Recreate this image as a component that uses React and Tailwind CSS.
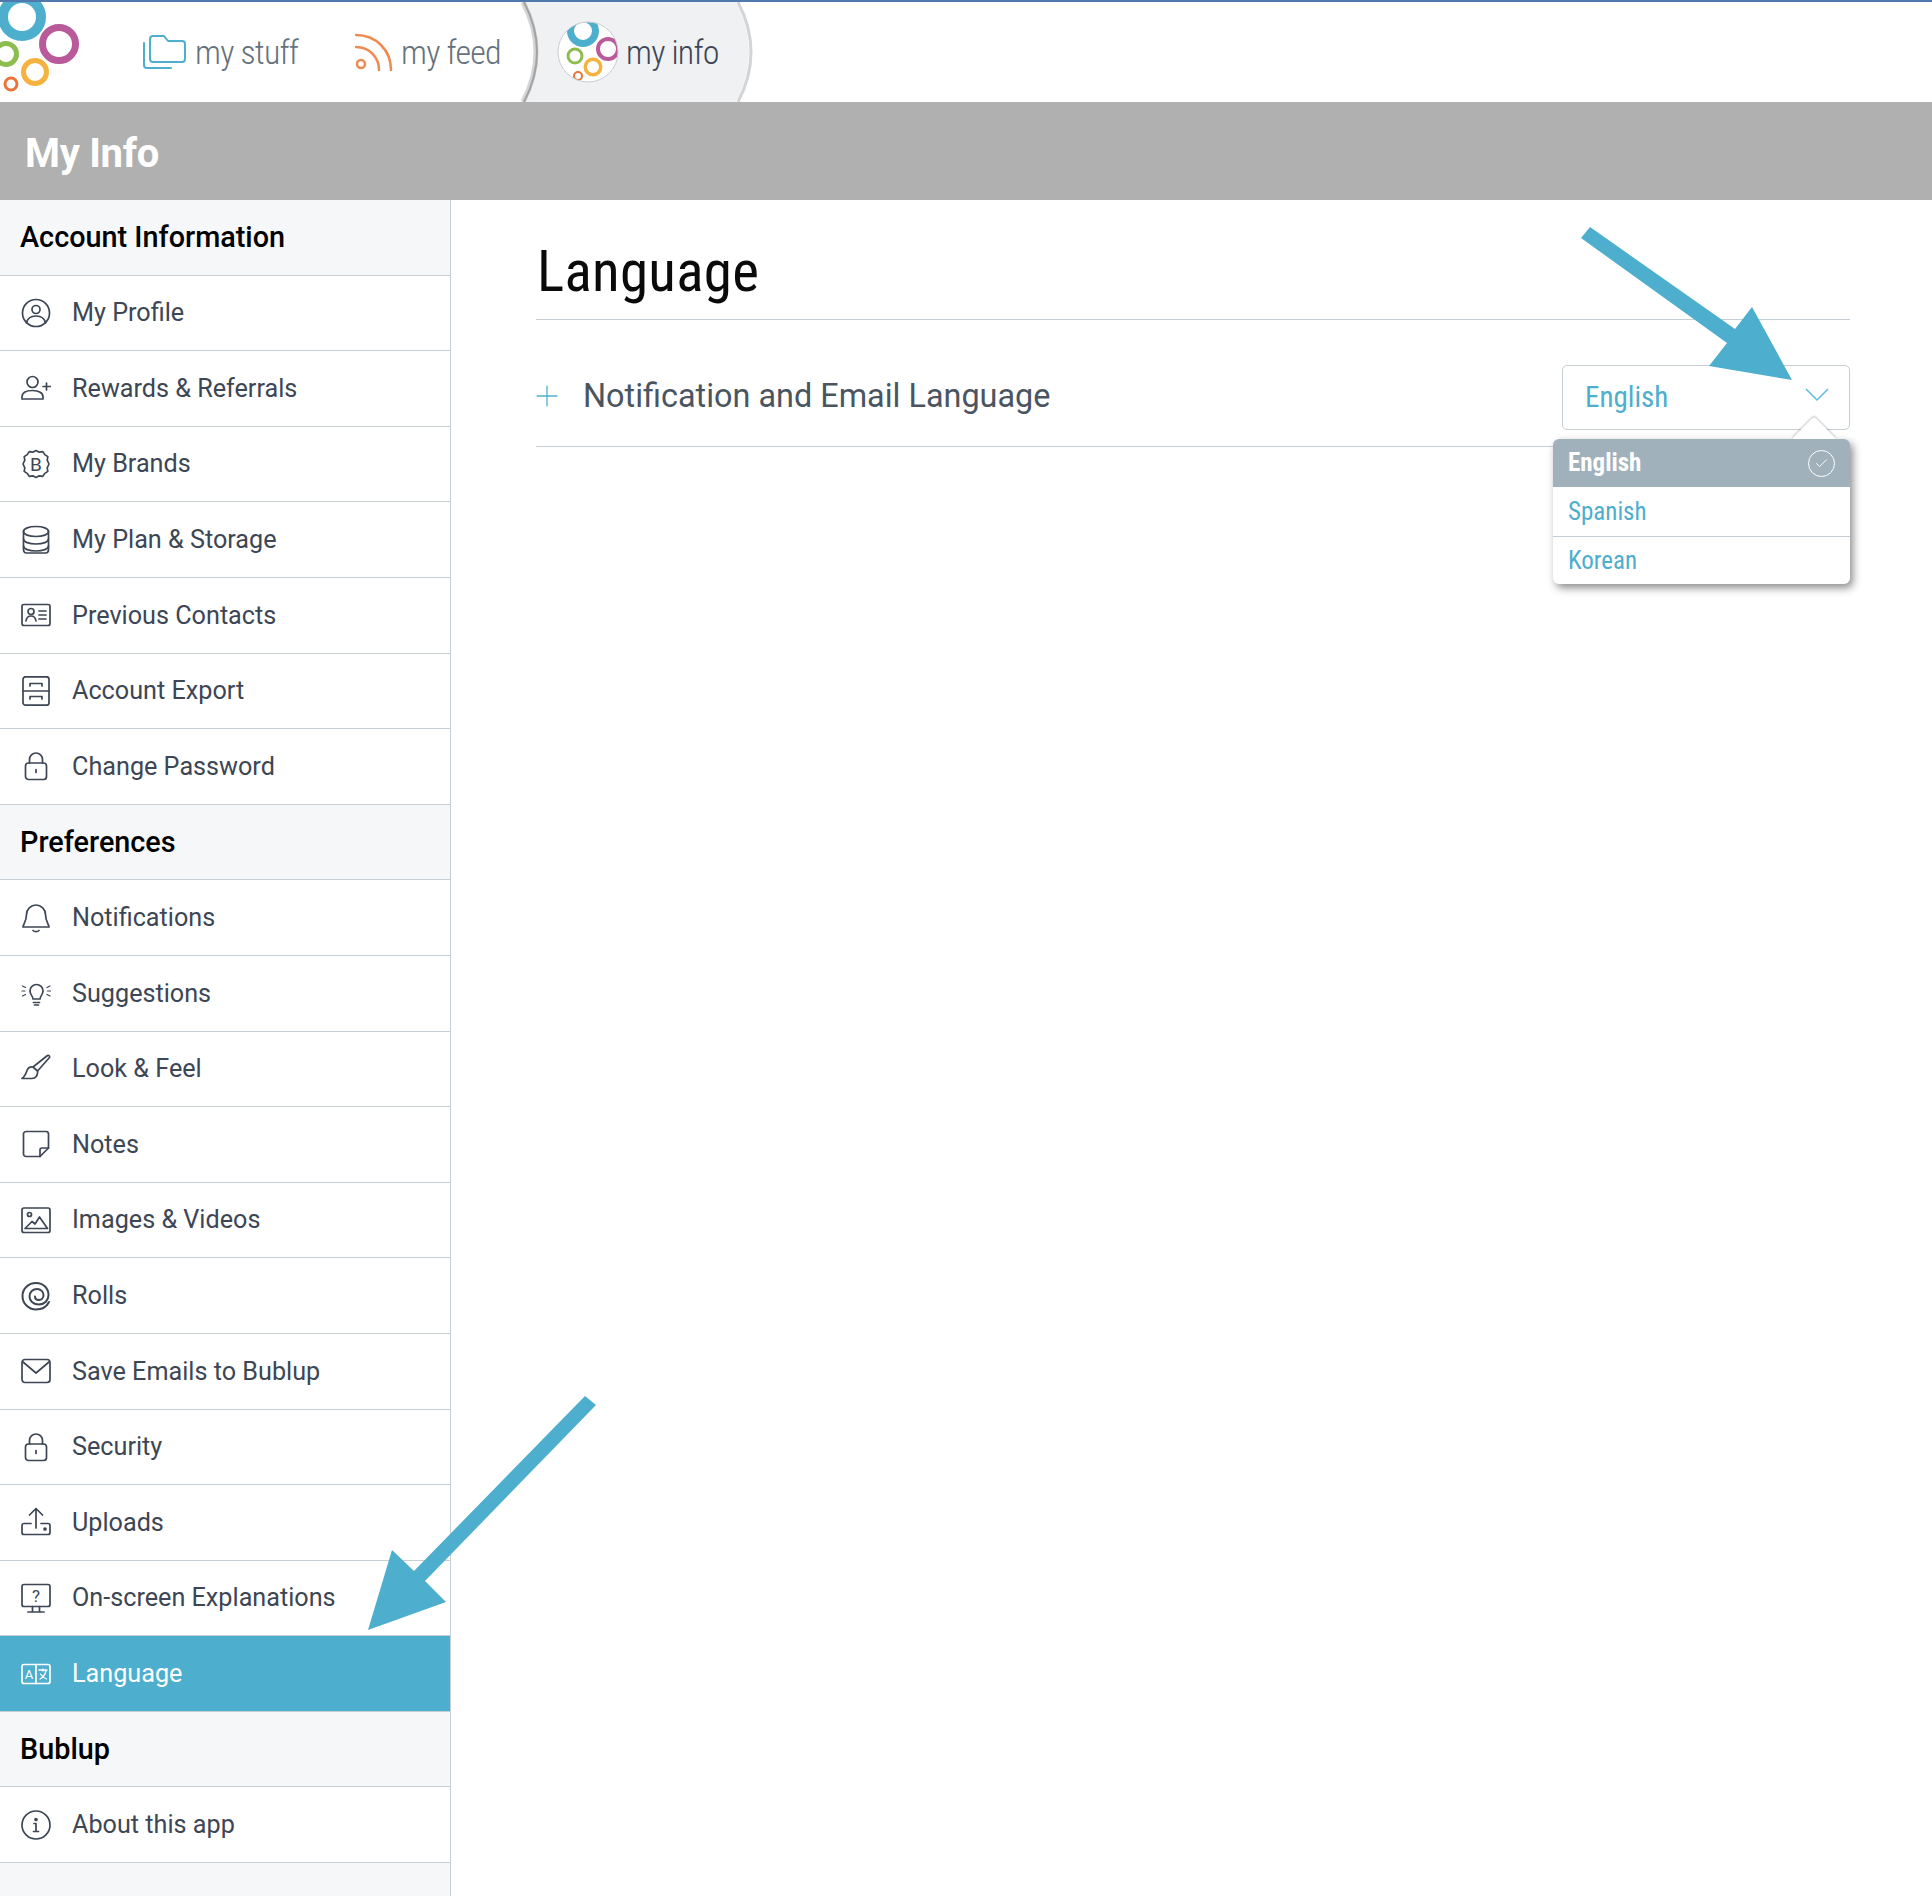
import { Check, Plus } from 'lucide-react';

const stroke = { fill: 'none', stroke: 'currentColor', strokeWidth: 1.700, strokeLinecap: 'round', strokeLinejoin: 'round' };

const icons = {
  profile: (<><circle cx="15" cy="15" r="13.500" /><circle cx="15" cy="11.500" r="4" /><path d="M5.500 25c1-5 4.500-7 9.500-7s8.500 2 9.500 7" /></>),
  rewards: (<><circle cx="11.500" cy="9" r="5.500" /><path d="M1 26v-2c0-4 4-6.500 10.500-6.500S22 20 22 24v2z" /><path d="M25.500 10v7M22 13.500h7.500" /></>),
  brands: (<><path d="M15 1.500l3.200 1.700 3.600-.6 2 3 3 2-.6 3.600L28 15l-1.800 3.800.6 3.600-3 2-2 3-3.600-.6-3.200 1.700-3.200-1.700-3.600.6-2-3-3-2 .6-3.600L2 15l1.800-3.800-.6-3.600 3-2 2-3 3.600.6z" /><text x="15" y="21.500" textAnchor="middle" fontSize="19" fontFamily="Roboto, sans-serif" fill="currentColor" stroke="none">B</text></>),
  plan: (<><path d="M2.500 6.500C2.500 3.500 8 1.500 15 1.500s12.500 2 12.500 5v18c0 2-1 3.500-3 3.500h-19c-2 0-3-1.500-3-3.500z" /><path d="M2.500 6.500c0 3 5.500 5 12.500 5s12.500-2 12.500-5M2.500 14c0 3 5.500 5 12.500 5s12.500-2 12.500-5M2.500 21c0 3 5.500 5 12.500 5s12.500-2 12.500-5" /></>),
  contacts: (<><rect x="1" y="4.500" width="28" height="21" rx="2" /><circle cx="10" cy="11.500" r="3" /><path d="M5 21c.5-3.500 2-5 5-5s4.500 1.500 5 5M18 11h7M18 15h7M18 19h7" /></>),
  export: (<><rect x="2" y="0.800" width="26" height="28.400" rx="2.500" /><path d="M2 15h26M9 10V7.500h12V10M9 23v-2.500h12V23" /></>),
  lock: (<><rect x="4.500" y="12" width="21" height="16.500" rx="3" /><path d="M8.500 12V8.500a6.500 6.500 0 0 1 13 0V12M15 18.500v3" /></>),
  bell: (<><path d="M15 2a9.500 9.500 0 0 0-9.500 9.500c0 7-3.500 10-3.500 12.500h26c0-2.500-3.500-5.500-3.500-12.500A9.500 9.500 0 0 0 15 2z" /><path d="M12 27.500c1.500 1.500 4.500 1.500 6 0" /></>),
  bulb: (<><path d="M12 21c0-3-3-4-3-8a6.500 6.500 0 0 1 13 0c0 4-3 5-3 8zM12.500 24.500h6M13.500 27h4" /><path d="M1.500 8l3 1.500M1.500 18l3-1.500M1 13h3M29 8l-3 1.500M29 18l-3-1.500M29.500 13h-3" strokeWidth="1.200" /></>),
  brush: (<><path d="M26.500 1.500c1.500-.5 2.500 .5 2 2L16.500 17 12 13z" /><path d="M12 13c-3-.5-5 1-6 3.500-1 3-2 6-5 8h10c3.500 0 6-3 5.500-7.500" /></>),
  notes: (<><path d="M5 2.500h20a2.500 2.500 0 0 1 2.500 2.500v14L19 27.500H5A2.500 2.500 0 0 1 2.500 25V5A2.500 2.500 0 0 1 5 2.500z" /><path d="M27.500 19H21a2 2 0 0 0-2 2v6.500" /></>),
  images: (<><rect x="1" y="3" width="28" height="24.500" rx="2" /><circle cx="8.500" cy="9.500" r="2" /><path d="M4 23.500l7-7 3 2.500 4.500-7 8 11.500z" /></>),
  rolls: (<path d="M28 21c-2.500 5-7.500 7.500-13 7.500C7.500 28.500 1.500 22.500 1.500 15S7.500 2 15 2s12.500 5.500 12.500 12c0 5.500-4 9.500-9.500 9.500S8.500 20 8.500 15.500 12 8 16 8s6.500 3 6.500 6-2 5-4.500 5-4-1.500-4-3.500" strokeWidth="2" />),
  mail: (<><rect x="1" y="3.500" width="28" height="23" rx="3" /><path d="M2 6l13 11L28 6" /></>),
  uploads: (<><path d="M15 21V1.500M8.500 8L15 1.500 21.500 8" /><path d="M10 16.500H3a2 2 0 0 0-2 2v7a2 2 0 0 0 2 2h24a2 2 0 0 0 2-2v-7a2 2 0 0 0-2-2h-7" /><circle cx="24" cy="22" r="1" fill="currentColor" /></>),
  screen: (<><rect x="1" y="1.500" width="28" height="22" rx="2" /><path d="M11.500 29v-5.500M18.500 29v-5.500M7 29h16" /><text x="15" y="18.500" textAnchor="middle" fontSize="17" fontFamily="Roboto, sans-serif" fill="currentColor" stroke="none">?</text></>),
  language: (<><rect x="1" y="5.500" width="28" height="19" rx="2" /><path d="M15 5.500v19" /><text x="8" y="20" textAnchor="middle" fontSize="13" fontFamily="Roboto, sans-serif" fill="currentColor" stroke="none">A</text><path d="M18 11h8M22 10v2M19 20c3-1.500 5-4 6-8M19.500 15c1.500 2.500 3.500 4 6 5" strokeWidth="1.300" /></>),
  info: (<><circle cx="15" cy="15" r="14" /><circle cx="15" cy="9.500" r="1" fill="currentColor" /><path d="M13 13.500h2v8M12.500 21.500h5" /></>),
};

const sections = [
  { title: 'Account Information', items: [['profile', 'My Profile'], ['rewards', 'Rewards & Referrals'], ['brands', 'My Brands'], ['plan', 'My Plan & Storage'], ['contacts', 'Previous Contacts'], ['export', 'Account Export'], ['lock', 'Change Password']] },
  { title: 'Preferences', items: [['bell', 'Notifications'], ['bulb', 'Suggestions'], ['brush', 'Look & Feel'], ['notes', 'Notes'], ['images', 'Images & Videos'], ['rolls', 'Rolls'], ['mail', 'Save Emails to Bublup'], ['lock', 'Security'], ['uploads', 'Uploads'], ['screen', 'On-screen Explanations'], ['language', 'Language']] },
  { title: 'Bublup', items: [['info', 'About this app']] },
];

function Ring({ cx, cy, outer, inner, color }) {
  return <circle cx={cx} cy={cy} r={(outer + inner) / 2} fill="none" stroke={color} strokeWidth={outer - inner} />;
}

function NavItem({ icon, label, className }) {
  return (
    <div className={`flex items-center ${className}`}>
      {icon}
      <span className="text-[34px] leading-none font-light tracking-[-0.8px] [font-stretch:83%]">{label}</span>
    </div>
  );
}

function SideRow({ icon, label }) {
  const active = label === 'Language';
  return (
    <div className={`flex h-[75.6px] items-center border-b border-[#c6ced6] pl-[21px] ${active ? 'bg-[#4daecd] text-white' : 'text-[#3d4654]'}`}>
      <svg viewBox="0 0 30 30" className="h-[30px] w-[30px] shrink-0" {...stroke}>{icons[icon]}</svg>
      <span className="ml-[21px] text-[25.2px] leading-none">{label}</span>
    </div>
  );
}

export default function App() {
  return (
    <div className="relative h-[1896px] w-[1932px] overflow-hidden bg-white font-['Roboto',sans-serif]">
      <header className="relative flex h-[102px] items-center border-t-2 border-[#4f79ac]">
        <svg className="absolute top-0 left-0 h-[100px] w-[800px]" viewBox="0 0 800 100">
          <path d="M522 0Q548 50 522 100L736 100Q762 50 736 0Z" fill="#eff1f3" />
          <path d="M523 0Q549 50 523 100" fill="none" stroke="#d4d4d4" strokeWidth="5" />
          <path d="M524 0Q550 50 524 100" fill="none" stroke="#a2a2a2" strokeWidth="2" />
          <path d="M738 0Q764 50 738 100" fill="none" stroke="#d2d4d6" strokeWidth="3" />
        </svg>
        <svg className="absolute top-0 left-0 h-[100px] w-[100px]" viewBox="0 0 100 100">
          <Ring cx={22} cy={15} outer={24} inner={14} color="#4daecd" />
          <Ring cx={59} cy={42} outer={20} inner={13} color="#b95b9b" />
          <Ring cx={6} cy={52} outer={13} inner={8} color="#8cbd4e" />
          <Ring cx={35} cy={70} outer={14} inner={9} color="#f5b23e" />
          <Ring cx={11} cy={82} outer={7.500} inner={4.500} color="#e8743a" />
        </svg>
        <nav className="relative flex items-center pl-[142px]">
          <NavItem
            className="w-[213px] text-[#66727b]"
            label="my stuff"
            icon={(
              <svg viewBox="0 0 44 36" className="mr-[9px] h-[36px] w-[44px] shrink-0 text-[#4daecd]" {...stroke} strokeWidth="2">
                <path d="M8 25V5a3 3 0 0 1 3-3h11l4 5h14a3 3 0 0 1 3 3v15a3 3 0 0 1-3 3H11a3 3 0 0 1-3-3z" />
                <path d="M2 9v22a3 3 0 0 0 3 3h24" />
              </svg>
            )}
          />
          <NavItem
            className="w-[202px] text-[#66727b]"
            label="my feed"
            icon={(
              <svg viewBox="0 0 38 38" className="mr-[8px] h-[38px] w-[38px] shrink-0 text-[#ee8a50]" {...stroke} strokeWidth="2.500">
                <circle cx="6" cy="31" r="4" />
                <path d="M1 14c13 0 23 10 23 23M1 2c20 0 35 15 35 35" />
              </svg>
            )}
          />
          <NavItem
            className="text-[#3d4654]"
            label="my info"
            icon={(
              <svg viewBox="0 0 62 62" className="mr-[7px] h-[62px] w-[62px] shrink-0">
                <defs><clipPath id="badge"><circle cx="31" cy="31" r="30" /></clipPath></defs>
                <circle cx="31" cy="31" r="30" fill="#fff" />
                <g clipPath="url(#badge)">
                  <Ring cx={26} cy={10} outer={16} inner={9} color="#4daecd" />
                  <Ring cx={51} cy={28} outer={12} inner={8} color="#b95b9b" />
                  <Ring cx={18} cy={35} outer={8.500} inner={5.500} color="#8cbd4e" />
                  <Ring cx={36} cy={46} outer={9.500} inner={6} color="#f5b23e" />
                  <Ring cx={21} cy={55} outer={5} inner={3} color="#e8743a" />
                </g>
                <circle cx="31" cy="31" r="30" fill="none" stroke="#c9cdd0" />
              </svg>
            )}
          />
        </nav>
      </header>

      <div className="flex h-[98px] items-center bg-[#b0b0b0] pt-[6px] pl-[25px]">
        <h1 className="text-[40px] leading-none font-bold tracking-[-0.3px] text-white">My Info</h1>
      </div>

      <div className="flex h-[1696px]">
        <aside className="w-[451px] shrink-0 border-r-[1.5px] border-[#c6ced6] bg-[#f6f7f9]">
          {sections.map((section) => (
            <div key={section.title}>
              <div className="flex h-[75.6px] items-center border-b border-[#c6ced6] pl-[20px] text-[28.8px] leading-none font-medium text-black">{section.title}</div>
              <div className="bg-white">
                {section.items.map(([icon, label]) => <SideRow key={label} icon={icon} label={label} />)}
              </div>
            </div>
          ))}
        </aside>

        <main className="ml-[85px] w-[1314px]">
          <div className="flex h-[120px] items-center border-b border-[#c4ced4] pt-[24px]">
            <h2 className="ml-[1px] text-[57px] leading-none tracking-[0.3px] text-[#0a0a0a] [font-stretch:85%]">Language</h2>
          </div>
          <div className="relative flex h-[127px] items-center border-b border-[#c4ced4] pt-[26px]">
            <Plus className="ml-[-6px] text-[#4daecd]" size={34} strokeWidth={0.900} />
            <span className="ml-[19px] text-[32.4px] leading-none text-[#4a5561]">Notification and Email Language</span>
            <div className="absolute top-[45px] right-0 flex h-[65px] w-[288px] items-center justify-between rounded-[5px] border border-[#c4ced4] pr-[20px] pl-[22px] text-[#4daecd]">
              <span className="text-[29px] leading-none [font-stretch:85%]">English</span>
              <svg viewBox="0 0 24 14" className="mb-[6px] h-[14px] w-[24px] text-[#5bbedb]" fill="none" stroke="currentColor" strokeWidth="1.500">
                <path d="M1 1l11 11L23 1" />
              </svg>
            </div>
            <div className="absolute top-[119px] right-0 w-[297px] rounded-[6px] bg-white shadow-[3px_4px_8px_rgba(0,0,0,0.45)]">
              <div className="absolute -top-[16px] right-[20px] h-[32px] w-[32px] rotate-45 rounded-[3px] bg-white shadow-[-1px_-1px_2px_rgba(0,0,0,0.2)]" />
              <div className="relative flex h-[48px] items-center justify-between rounded-t-[6px] bg-[#a1b1bb] pr-[15px] pl-[15px] text-white">
                <span className="mb-[1px] text-[25px] leading-none font-bold [font-stretch:85%]">English</span>
                <span className="flex h-[27px] w-[27px] items-center justify-center rounded-full border-[1.5px] border-white">
                  <Check size={15} strokeWidth={1.500} />
                </span>
              </div>
              <div className="relative flex h-[50px] items-center border-b border-[#c4ced4] pl-[15px] text-[25px] leading-none text-[#4daecd] [font-stretch:85%]">Spanish</div>
              <div className="relative flex h-[47px] items-center pl-[15px] text-[25px] leading-none text-[#4daecd] [font-stretch:85%]">Korean</div>
            </div>
          </div>
        </main>
      </div>

      <svg className="pointer-events-none absolute top-0 left-0 h-[1896px] w-[1932px]" viewBox="0 0 1932 1896">
        <polygon points="1590,227 1581,238 1727,343 1709,366 1792,380 1752,307 1735,329" fill="#4daecd" />
        <polygon points="585,1396 596,1405 425,1581 446,1602 368,1630 392,1550 414,1571" fill="#4daecd" />
      </svg>
    </div>
  );
}
